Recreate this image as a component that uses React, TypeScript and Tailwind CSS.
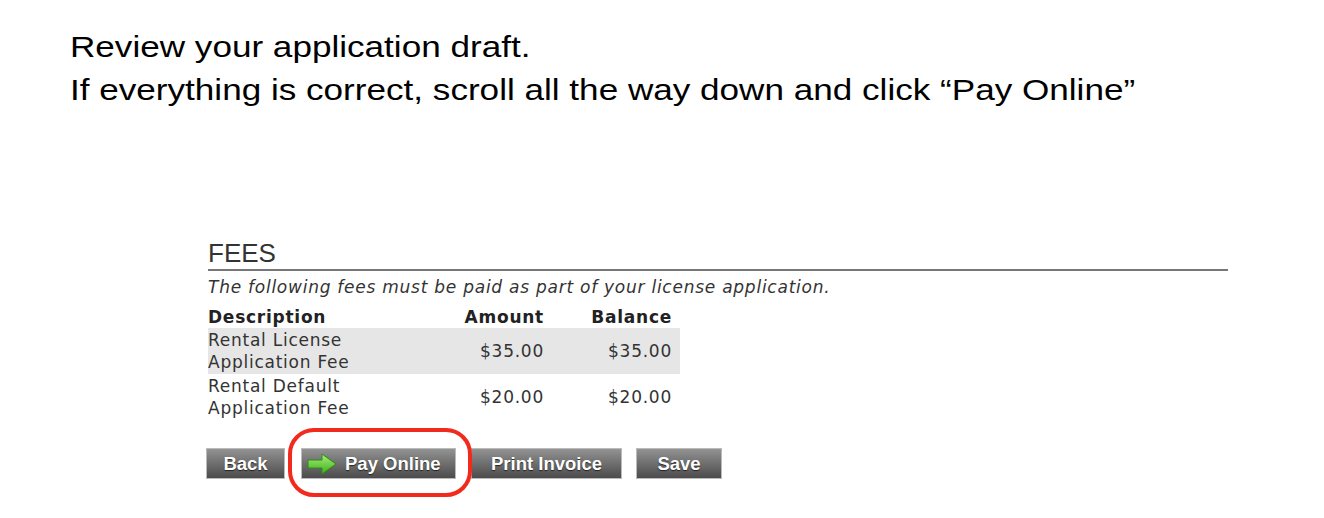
import React from "react"

const fees = [
  { desc: ["Rental License", "Application Fee"], amount: "$35.00", balance: "$35.00" },
  { desc: ["Rental Default", "Application Fee"], amount: "$20.00", balance: "$20.00" },
]

function Arrow() {
  return (
    <svg width="30" height="22" viewBox="0 0 30 22">
      <defs>
        <linearGradient id="ag" x1="0" y1="0" x2="0" y2="1">
          <stop offset="0" stopColor="#a6f07a" />
          <stop offset="1" stopColor="#3fae1c" />
        </linearGradient>
      </defs>
      <path d="M1 7 H15 V1 L29 11 L15 21 V15 H1 Z" fill="url(#ag)" stroke="#2f8a14" strokeWidth="1" />
    </svg>
  )
}

function Btn({ children, className = "" }: { children: React.ReactNode; className?: string }) {
  return (
    <button
      className={
        "h-[31px] flex items-center justify-center gap-2 border border-[#bbb] bg-gradient-to-b from-[#939393] to-[#4c4c4c] text-white font-bold text-[18.5px] [text-shadow:0_1px_1px_#222] " +
        className
      }
      style={{ fontFamily: '"Liberation Sans", Arial, sans-serif' }}
    >
      {children}
    </button>
  )
}

export default function App() {
  return (
    <div className="w-[1324px] h-[518px] bg-white relative overflow-hidden">
      <div
        className="pl-[70px] pt-[25px] text-[30px] leading-[43px] text-black"
        style={{ fontFamily: '"Liberation Sans", Arial, sans-serif' }}
      >
        <p className="origin-left scale-x-[1.17] whitespace-nowrap">Review your application draft.</p>
        <p className="origin-left scale-x-[1.17] whitespace-nowrap">If everything is correct, scroll all the way down and click “Pay Online”</p>
      </div>

      <section className="ml-[208px] mt-[127px] w-[1020px]">
        <h2
          className="text-[26px] leading-[30px] text-[#333]"
          style={{ fontFamily: '"Liberation Sans", Arial, sans-serif' }}
        >
          FEES
        </h2>
        <div className="h-[2px] bg-[#777] mt-[1px]" />
        <div style={{ fontFamily: '"DejaVu Sans", Verdana, sans-serif' }} className="text-[#333] text-[17px] tracking-[0.75px]">
          <p className="italic leading-[22px] mt-[5px]">
            The following fees must be paid as part of your license application.
          </p>
          <table className="w-[472px] table-fixed leading-[22px] border-collapse mt-[8px]">
            <colgroup>
              <col className="w-[250px]" />
              <col className="w-[92px]" />
              <col className="w-[130px]" />
            </colgroup>
            <thead>
              <tr className="text-[#222]">
                <th className="text-left font-bold">Description</th>
                <th className="text-right font-bold pr-[6px]">Amount</th>
                <th className="text-right font-bold pr-[8px]">Balance</th>
              </tr>
            </thead>
            <tbody>
              {fees.map((f, i) => (
                <tr key={i} className={i == 0 ? "bg-[#e6e6e6]" : ""}>
                  <td className="py-[1px] whitespace-nowrap">
                    {f.desc[0]}
                    <br />
                    {f.desc[1]}
                  </td>
                  <td className="text-right pr-[6px]">{f.amount}</td>
                  <td className="text-right pr-[8px]">{f.balance}</td>
                </tr>
              ))}
            </tbody>
          </table>
        </div>
      </section>

      <div className="flex items-center ml-[206px] mt-[28px]">
        <Btn className="w-[79px]">Back</Btn>
        <Btn className="w-[155px] ml-[16px] justify-start pl-[5px] gap-[8px]">
          <Arrow />
          Pay Online
        </Btn>
        <Btn className="w-[151px] ml-[15px]">Print Invoice</Btn>
        <Btn className="w-[86px] ml-[14px]">Save</Btn>
      </div>

      <div className="absolute left-[288px] top-[428px] w-[184px] h-[69px] rounded-[26px] border-[4px] border-[#f2291d]" />
    </div>
  )
}
